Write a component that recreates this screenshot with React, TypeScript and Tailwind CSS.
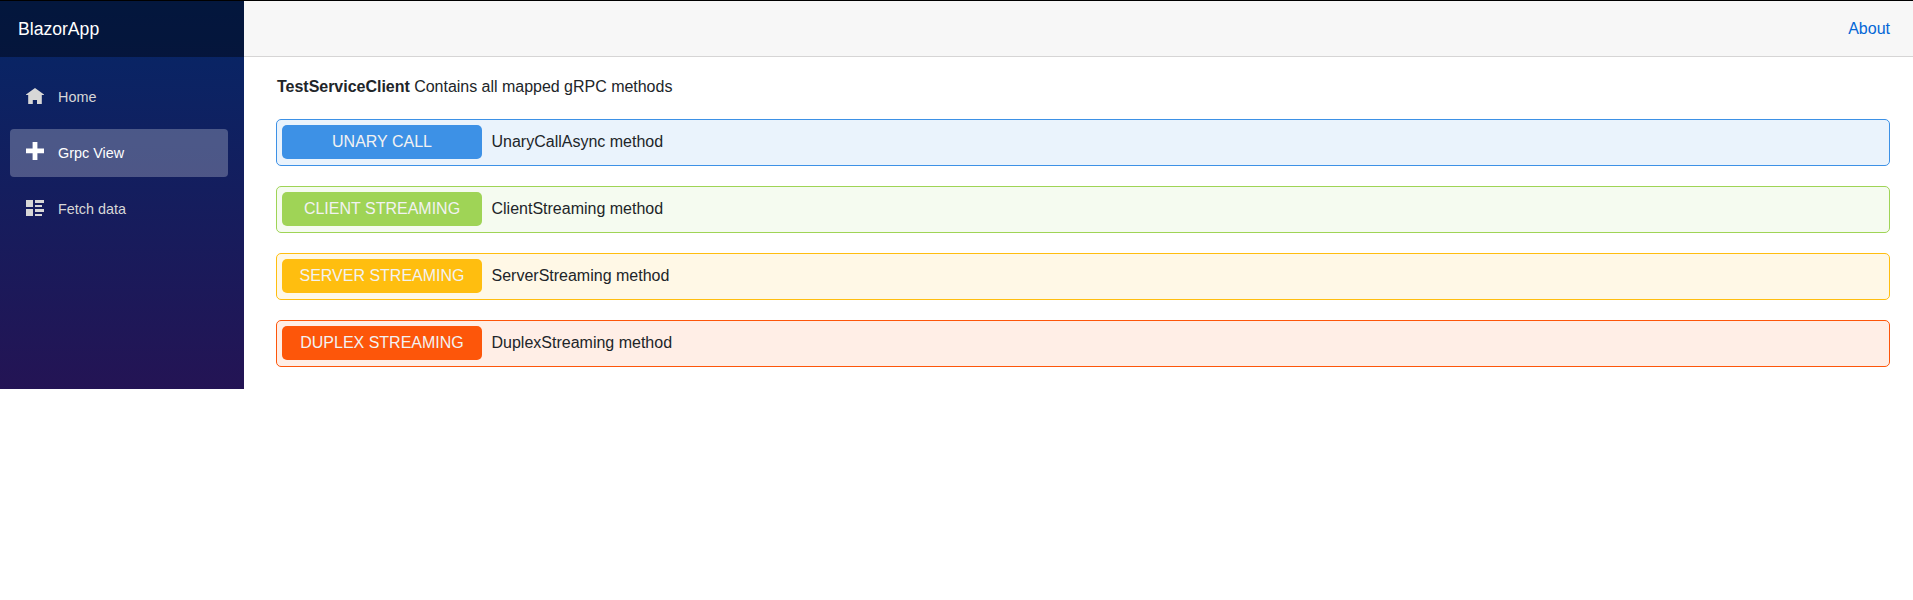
import type { ReactNode } from "react";

const navItems: { label: string; active?: boolean; icon: ReactNode }[] = [
  {
    label: "Home",
    icon: <path d="M9 0L0 6.6V7H2.2V16H6.8V12H11V16H15.8V7H18V6.6L9 0Z" />,
  },
  {
    label: "Grpc View",
    active: true,
    icon: <path d="M6.6 -2V4.6H0V9.3H6.6V16H11.4V9.3H18V4.6H11.4V-2Z" />,
  },
  {
    label: "Fetch data",
    icon: <path d="M0 0H7V7H0ZM9 0H18V3H9ZM9 5H16V7H9ZM0 9H7V16H0ZM9 9H18V12H9ZM9 14H16V16H9Z" />,
  },
];

const methods = [
  { kind: "UNARY CALL", name: "UnaryCallAsync method", card: "border-[#3d91e6] bg-[#eaf3fc]", badge: "bg-[#3d91e6]" },
  { kind: "CLIENT STREAMING", name: "ClientStreaming method", card: "border-[#9fd456] bg-[#f5fbf0]", badge: "bg-[#9fd456]" },
  { kind: "SERVER STREAMING", name: "ServerStreaming method", card: "border-[#ffbe0f] bg-[#fff8e6]", badge: "bg-[#ffbe0f]" },
  { kind: "DUPLEX STREAMING", name: "DuplexStreaming method", card: "border-[#fd560a] bg-[#ffeee6]", badge: "bg-[#fd560a]" },
];

export default function App() {
  return (
    <div className="flex min-h-screen items-start border-t border-black bg-white font-['Liberation_Sans',Arial,sans-serif] text-base leading-6 text-[#212529]">
      <aside className="h-[388px] w-[244px] shrink-0 bg-[linear-gradient(180deg,rgb(5,39,103)_0px,#3a0647_668px)]">
        <div className="flex h-14 items-center bg-black/40 pl-[18px] text-[17.6px] text-white">BlazorApp</div>
        <nav className="flex flex-col gap-2 pt-4 pr-4 pl-2.5">
          {navItems.map((item) => (
            <a
              key={item.label}
              className={`flex h-12 items-center rounded px-4 text-[14.4px] ${
                item.active ? "bg-white/25 text-white" : "text-[#d7d7d7]"
              }`}
            >
              <svg className="mr-3.5 h-[18px] w-[18px] shrink-0 overflow-visible" viewBox="0 0 18 18" fill="currentColor">
                {item.icon}
              </svg>
              {item.label}
            </a>
          ))}
        </nav>
      </aside>
      <main className="min-w-0 flex-1">
        <header className="flex h-14 items-center justify-end border-b border-[#d6d5d5] bg-[#f7f7f7] pr-[23px]">
          <a className="text-[#0366d6]">About</a>
        </header>
        <section className="pt-[18px] pr-[23px] pl-8">
          <p className="pl-px tracking-[-0.02px]">
            <b>TestServiceClient</b> Contains all mapped gRPC methods
          </p>
          <div className="mt-5 flex flex-col gap-5">
            {methods.map((m) => (
              <div key={m.kind} className={`flex h-[47px] items-start rounded-[5px] border p-[5px] ${m.card}`}>
                <span className={`flex h-[34px] w-[200px] items-center justify-center rounded-[5px] pb-px text-[#f2f2f2] ${m.badge}`}>
                  {m.kind}
                </span>
                <span className="ml-[9.5px] flex h-[34px] items-center pb-px">{m.name}</span>
              </div>
            ))}
          </div>
        </section>
      </main>
    </div>
  );
}
